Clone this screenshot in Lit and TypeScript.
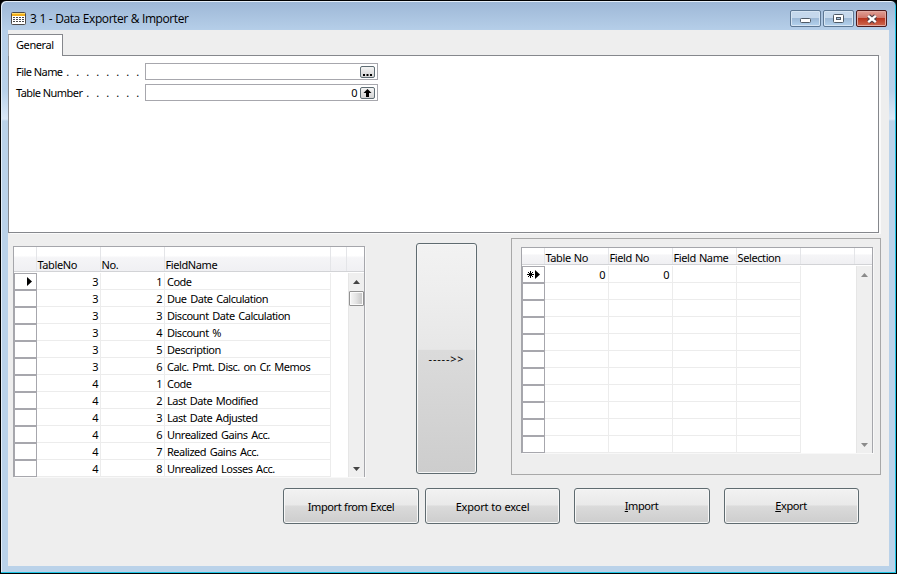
import { LitElement, html, css, svg } from 'lit';
import { customElement, property } from 'lit/decorators.js';

interface Column {
  title: string;
  width: number;
  align?: 'right';
}

/**
 * A grid with a record indicator column and a vertical scroll bar
 *
 * @property {Column[]} columns - The column titles and widths
 * @property {string[][]} rows - The cell texts, one array per row
 * @property {boolean} tall - Use the high header
 * @property {boolean} fresh - The first row is a new record
 */
@customElement('nav-grid')
export class NavGrid extends LitElement {
  @property({ attribute: false }) columns: Column[] = [];
  @property({ attribute: false }) rows: string[][] = [];
  @property({ type: Boolean, reflect: true }) tall = false;
  @property({ type: Boolean, reflect: true }) fresh = false;

  static styles = css`
    :host {
      display: block;
      box-sizing: border-box;
      width: 352px;
      border: solid #a5a6ab;
      border-width: 1px 1px 0;
      background: #fff;
      box-shadow: 1px 1px #f8f8f8;
    }
    .head {
      display: flex;
      box-sizing: border-box;
      height: 17px;
      border-bottom: 1px solid #d2d3d6;
      background: linear-gradient(#fff 35%, #f5f5f7 45%, #f0f0f3);
    }
    :host([tall]) .head {
      height: 25px;
    }
    .corner,
    .title {
      display: flex;
      align-items: flex-end;
      box-sizing: border-box;
      flex: none;
      border-right: 1px solid #e4e5e8;
      line-height: 12px;
      white-space: nowrap;
      letter-spacing: -0.4px;
      word-spacing: 0.6px;
    }
    .corner {
      width: 23px;
    }
    .title {
      padding-left: 0.5px;
    }
    :host([fresh]) .title {
      line-height: 13px;
    }
    .filler {
      flex: 1;
      margin-right: 17px;
      border-right: 1px solid #e4e5e8;
    }
    .body {
      display: flex;
      padding-top: 1px;
    }
    .row {
      display: flex;
      height: 17px;
    }
    .mark {
      display: flex;
      align-items: center;
      justify-content: flex-end;
      box-sizing: border-box;
      width: 23px;
      padding-right: 3px;
      border: 1px solid #a7a7ad;
    }
    .cell {
      box-sizing: border-box;
      height: 17px;
      padding: 0 2px;
      border: solid #ececec;
      border-width: 0 1px 1px 0;
      line-height: 17px;
      white-space: nowrap;
    }
    .right {
      text-align: right;
    }
    :host([fresh]) .right {
      padding-right: 3px;
    }
    .scroll {
      display: flex;
      flex-direction: column;
      align-items: center;
      justify-content: space-between;
      box-sizing: border-box;
      width: 16px;
      margin: 0 0 0 auto;
      padding: 7px 0 6px;
      background: #efefef;
      border-left: 1px solid #e6e6e6;
    }
    .thumb {
      box-sizing: border-box;
      width: 15px;
      height: 15px;
      margin: 7px 0 auto;
      border: 1px solid #929292;
      border-radius: 1px;
      background: linear-gradient(90deg, #f6f6f6, #e4e4e4 45%, #c3c3c3);
      box-shadow: inset 0 0 0 1px #fafafa;
    }
    svg {
      display: block;
      flex: none;
    }
  `;

  renderMark(index: number) {
    if (index > 0) return '';
    return this.fresh
      ? html`<svg width="14" height="9">
          <path d="M0 4.5H7M3.5 1V8M1 2L6 7M6 2L1 7" stroke="#000" stroke-width="1" />
          <path d="M8 0L13 4.5L8 9Z" />
        </svg>`
      : html`<svg width="7" height="9"><path d="M1 0L6 4.5L1 9Z" /></svg>`;
  }

  render() {
    const color = this.fresh ? '#8a8a8a' : '#444';
    return html`
      <div class="head">
        <div class="corner"></div>
        ${this.columns.map(c => html`<div class="title" style="width:${c.width}px">${c.title}</div>`)}
        <div class="filler"></div>
      </div>
      <div class="body">
        <div>
          ${this.rows.map((row, i) => html`
            <div class="row">
              <div class="mark">${this.renderMark(i)}</div>
              ${this.columns.map((c, j) => html`
                <div class="cell ${c.align ?? ''}" style="width:${c.width}px">${row[j]}</div>
              `)}
            </div>
          `)}
        </div>
        <div class="scroll">
          <svg width="7" height="4"><path d="M3.5 0L7 4H0Z" fill=${color} /></svg>
          ${this.fresh ? '' : html`<div class="thumb"></div>`}
          <svg width="7" height="4"><path d="M0 0H7L3.5 4Z" fill=${color} /></svg>
        </div>
      </div>
    `;
  }
}

const FIELD_COLUMNS: Column[] = [
  { title: 'TableNo', width: 64, align: 'right' },
  { title: 'No.', width: 64, align: 'right' },
  { title: 'FieldName', width: 166 },
];

const FIELDS = [
  ['3', '1', 'Code'],
  ['3', '2', 'Due Date Calculation'],
  ['3', '3', 'Discount Date Calculation'],
  ['3', '4', 'Discount %'],
  ['3', '5', 'Description'],
  ['3', '6', 'Calc. Pmt. Disc. on Cr. Memos'],
  ['4', '1', 'Code'],
  ['4', '2', 'Last Date Modified'],
  ['4', '3', 'Last Date Adjusted'],
  ['4', '6', 'Unrealized Gains Acc.'],
  ['4', '7', 'Realized Gains Acc.'],
  ['4', '8', 'Unrealized Losses Acc.'],
];

const SELECTED_COLUMNS: Column[] = [
  { title: 'Table No', width: 64, align: 'right' },
  { title: 'Field No', width: 64, align: 'right' },
  { title: 'Field Name', width: 64 },
  { title: 'Selection', width: 64 },
];

const SELECTED = [['0', '0', '', ''], ...Array.from({ length: 10 }, () => ['', '', '', ''])];

const tableIcon = html`
  <svg width="15" height="13">
    <rect x=".5" y=".5" width="14" height="12" rx="1" fill="#fff" stroke="#4e4a48" />
    <rect x="1" y="1" width="13" height="3" fill="#f2b01e" />
    <path d="M1 1.5H14" stroke="#ffdc6e" />
    ${[5.5, 7.5, 9.5].map(y => svg`<path d="M2 ${y}H13" stroke="#4a4a4a" stroke-dasharray="2 1" />`)}
  </svg>
`;

@customElement('app-root')
export class AppRoot extends LitElement {
  static styles = css`
    :host {
      display: block;
      height: 574px;
      overflow: hidden;
      background: #000;
      color: #000;
      font: 11px 'Noto Sans', sans-serif;
      letter-spacing: -0.5px;
      word-spacing: 1.3px;
    }
    .window {
      display: flex;
      flex-direction: column;
      box-sizing: border-box;
      width: 897px;
      height: 574px;
      padding: 0 7px 7px;
      border: solid #000;
      border-width: 1px;
      border-radius: 6px 6px 0 0;
      background: linear-gradient(#9db7d6, #b6cfe9 30px, #b8d1ea 90px, #dbe8f6 118px, #bad2e9 120px);
      box-shadow: inset -1px -1px #1fc4e4, inset 1px 1px #e4eef8;
    }
    .titlebar {
      display: flex;
      flex: none;
      height: 29px;
      padding: 0 2px 0 3px;
      font: 12px 'Open Sans', sans-serif;
      letter-spacing: -0.43px;
      word-spacing: 0.3px;
    }
    .titlebar > svg {
      margin: 11px 4px 0 0;
    }
    .caption {
      flex: 1;
      line-height: 35px;
    }
    .controls {
      display: flex;
      gap: 2px;
      padding-top: 9px;
    }
    .control {
      display: flex;
      align-items: center;
      justify-content: center;
      box-sizing: border-box;
      width: 31px;
      height: 17px;
      border: 1px solid #5d7793;
      border-radius: 2px;
      background: linear-gradient(#c5d8ec 45%, #9db9d6 50%, #b4d2ee);
      box-shadow: inset 0 0 0 1px #d6e5f3;
    }
    .close {
      border-color: #4c1a1c;
      background: linear-gradient(#e0a096, #d0766a 45%, #b8351f 50%, #cf6a50);
      box-shadow: inset 0 0 0 1px #e2aaa2;
    }
    .client {
      flex: 1;
      width: 881px;
      background: #eee;
    }
    .tabs {
      padding-top: 4px;
      height: 21px;
    }
    .tab {
      position: relative;
      box-sizing: border-box;
      width: 55px;
      height: 22px;
      padding-left: 7px;
      border: 1px solid #85878c;
      border-bottom: 0;
      border-left-color: #a0a2a6;
      background: #fff;
      line-height: 20px;
      letter-spacing: -0.4px;
    }
    .page {
      display: flex;
      flex-direction: column;
      gap: 4px;
      box-sizing: border-box;
      width: 871px;
      height: 178px;
      padding: 7px;
      border: 1px solid #85878c;
      background: #fff;
      box-shadow: 2px 1px #fafafa;
    }
    .field {
      display: flex;
      height: 17px;
      line-height: 18px;
    }
    .label {
      display: flex;
      justify-content: space-between;
      width: 129px;
      white-space: nowrap;
      letter-spacing: -0.55px;
      word-spacing: 0;
    }
    .dots {
      display: flex;
      padding-right: 4px;
    }
    .dots i {
      width: 10px;
      text-align: center;
      font-style: normal;
    }
    .input {
      display: flex;
      align-items: center;
      justify-content: flex-end;
      gap: 3px;
      box-sizing: border-box;
      width: 233px;
      padding-right: 2px;
      border: 1px solid #a7a7ad;
    }
    .assist {
      box-sizing: border-box;
      width: 15px;
      height: 12px;
      border: 1px solid #5f6d74;
      border-radius: 2px;
      background: linear-gradient(#f4f4f4, #d4d4d4);
    }
    .assist svg,
    .control svg,
    .titlebar > svg {
      display: block;
      flex: none;
    }
    .work {
      display: flex;
      align-items: flex-start;
      padding: 5px 8px 0 5px;
      height: 250px;
      box-sizing: border-box;
    }
    .source {
      margin: 8px 51px 0 0;
    }
    .button {
      display: flex;
      align-items: center;
      justify-content: center;
      box-sizing: border-box;
      width: 136px;
      height: 36px;
      border: 1px solid #5f6b70;
      border-radius: 3px;
      background: linear-gradient(#f2f2f2, #e9e9e9 48%, #dbdbdb 49%, #cdcdcd);
      box-shadow: inset 0 0 0 1px #f7f7f7;
      letter-spacing: -0.4px;
      word-spacing: 0.3px;
    }
    .move {
      width: 61px;
      height: 231px;
      margin: 5px 34px 0 0;
      background: linear-gradient(#f2f2f2, #eee 20%, #e7e7e7 46%, #dbdbdb 46.5%, #cdcdcd);
      letter-spacing: 0.8px;
    }
    .target {
      box-sizing: border-box;
      width: 370px;
      height: 237px;
      padding: 8px 0 0 9px;
      border: 1px solid #a8a8a8;
      flex: none;
    }
    .actions {
      display: flex;
      padding: 5px 0 0 275px;
    }
    .narrow {
      width: 135px;
    }
    .actions .button:nth-child(2) {
      margin: 0 14px 0 6px;
      letter-spacing: -0.2px;
    }
    .actions .button:nth-child(4) {
      margin-left: 14px;
    }
    .actions .button:nth-child(n + 3) {
      padding: 0 1px 1px 0;
    }
  `;

  renderLabel(text: string, dots: number) {
    return html`
      <div class="label">
        <span>${text}</span>
        <span class="dots">${Array.from({ length: dots }, () => html`<i>.</i>`)}</span>
      </div>
    `;
  }

  render() {
    return html`
      <div class="window">
        <div class="titlebar">
          ${tableIcon}
          <div class="caption">3 1 - Data Exporter &amp; Importer</div>
          <div class="controls">
            <div class="control">
              <svg width="11" height="5" style="margin-top:4px">
                <rect x=".5" y=".5" width="10" height="4" rx="1" fill="#fff" stroke="#4f5a66" />
              </svg>
            </div>
            <div class="control">
              <svg width="11" height="9">
                <rect x=".5" y=".5" width="10" height="8" rx="1" fill="#fff" stroke="#4f5a66" />
                <rect x="3.5" y="3.5" width="4" height="2" fill="#a8c4e0" stroke="#4f5a66" />
              </svg>
            </div>
            <div class="control close">
              <svg width="12" height="10">
                <path d="M2.5 2L9.5 8M9.5 2L2.5 8" stroke="#4e4048" stroke-width="4.4" />
                <path d="M2.2 1.8L9.8 8.2M9.8 1.8L2.2 8.2" stroke="#fff" stroke-width="2.4" />
              </svg>
            </div>
          </div>
        </div>
        <div class="client">
          <div class="tabs"><div class="tab">General</div></div>
          <div class="page">
            <div class="field">
              ${this.renderLabel('File Name', 8)}
              <div class="input">
                <div class="assist">
                  <svg width="13" height="10"><path d="M2 7h2v2H2zM5.5 7h2v2h-2zM9 7h2v2H9z" /></svg>
                </div>
              </div>
            </div>
            <div class="field">
              ${this.renderLabel('Table Number', 6)}
              <div class="input">
                0
                <div class="assist">
                  <svg width="13" height="10"><path d="M6.5 1L10.5 5H8V9H5V5H2.5Z" /></svg>
                </div>
              </div>
            </div>
          </div>
          <div class="work">
            <nav-grid class="source" tall .columns=${FIELD_COLUMNS} .rows=${FIELDS}></nav-grid>
            <div class="button move">-----&gt;&gt;</div>
            <div class="target">
              <nav-grid fresh .columns=${SELECTED_COLUMNS} .rows=${SELECTED}></nav-grid>
            </div>
          </div>
          <div class="actions">
            <div class="button">Import from Excel</div>
            <div class="button narrow">Export to excel</div>
            <div class="button"><span><u>I</u>mport</span></div>
            <div class="button narrow"><span><u>E</u>xport</span></div>
          </div>
        </div>
      </div>
    `;
  }
}
